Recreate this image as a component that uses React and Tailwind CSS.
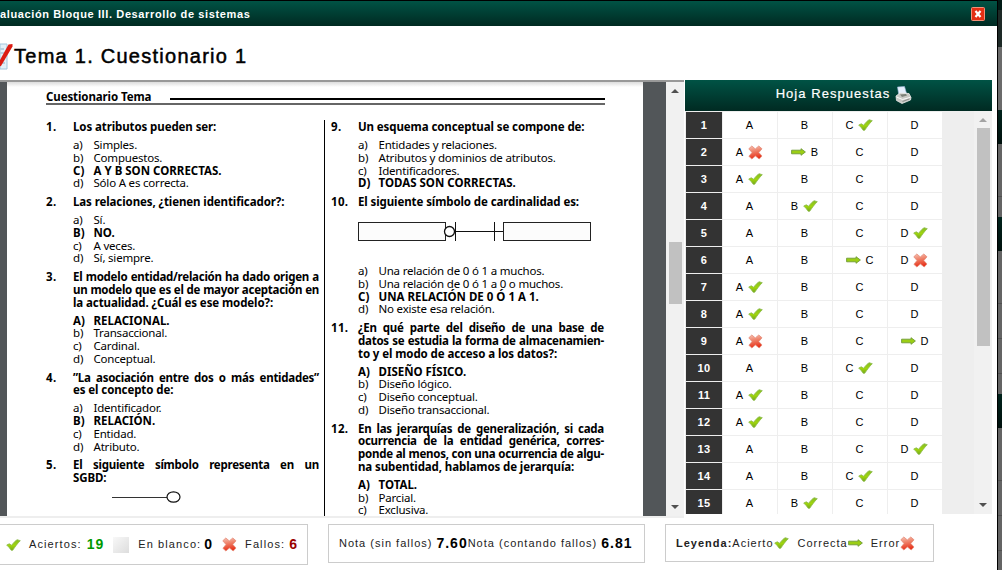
import React from 'react';

function Check() {
  return (
    <svg width="15" height="12" viewBox="0 0 15 12" className="shrink-0">
      <defs>
        <linearGradient id="ck" x1="0" y1="0" x2="0" y2="1">
          <stop offset="0" stopColor="#86bd24" />
          <stop offset=".55" stopColor="#9fd50c" />
          <stop offset="1" stopColor="#76a81c" />
        </linearGradient>
      </defs>
      <path d="M.7 6 3.300 4.800 5.600 6.300C7.300 4 9 2 11.200.7L14.300 1.700C11.200 4.600 9 8 6.700 11.300H5.200C3.900 9.300 2.500 7.600.7 6Z" fill="url(#ck)" stroke="#8cba4a" strokeWidth=".8" />
    </svg>
  );
}

function Cross() {
  return (
    <svg width="15" height="15" viewBox="0 0 15 15" className="shrink-0">
      <defs>
        <linearGradient id="cr" x1="0" y1="0" x2=".2" y2="1">
          <stop offset="0" stopColor="#f7c3b4" />
          <stop offset=".5" stopColor="#ee7b62" />
          <stop offset="1" stopColor="#e8321b" />
        </linearGradient>
      </defs>
      <path d="M.8 3.800 3.800 1 7.300 3.900 10.800 1 14 3.800 10.800 7.500 14 11 11.200 14 7.400 10.900 3.900 14 .9 11.300 4 7.500Z" fill="url(#cr)" stroke="#e58b78" strokeWidth=".8" />
    </svg>
  );
}

function Arrow() {
  return (
    <svg width="15" height="8" viewBox="0 0 15 8" className="shrink-0">
      <path d="M.6 2.200H10V.7L14.400 4 10 7.300V5.800H.6Z" fill="#9bce14" stroke="#6f9b35" strokeWidth=".9" />
    </svg>
  );
}

function Printer() {
  return (
    <svg width="17" height="19" viewBox="0 0 17 19" className="shrink-0">
      <path d="M2.500 1 9.500.5 12 9 4 10Z" fill="#e4effc" stroke="#9db9dc" strokeWidth=".6" />
      <path d="M1 10 5 7 14 7.500 16 11.500 15.500 14 7 17.500 1.500 14.500Z" fill="#c9c9c5" stroke="#e9e9e7" strokeWidth=".8" />
      <path d="M1.500 11 7.500 13.500 15.500 11.300" fill="none" stroke="#fafafa" />
      <path d="M5 8.500 11 8 12 9.500 7 11Z" fill="#7c8078" />
      <path d="m7.500 15.500 7-2.600" stroke="#8b8b88" />
    </svg>
  );
}

function Question({ n, lines, options, figure, correct }) {
  return (
    <div className="mb-[6px] flex">
      <b className="w-[27px] shrink-0 tracking-[0.3px]">{n}.</b>
      <div className="w-[246px] shrink-0">
        <div className="mb-[5.3px] font-bold">
          {lines.map(([text, justified]) => (
            <div key={text} className={justified ? 'whitespace-nowrap tracking-[-0.25px] [text-align-last:justify]' : 'whitespace-nowrap tracking-[-0.1px]'}>{text}</div>
          ))}
        </div>
        {figure}
        {options.map((text, i) => (
          <div key={text} className={i === correct ? 'flex whitespace-nowrap font-bold' : 'flex whitespace-nowrap tracking-[-0.2px]'}>
            <span className="w-[20.500px] shrink-0">{i === correct ? 'ABCD'[i] : 'abcd'[i]})</span>
            <span>{text}</span>
          </div>
        ))}
      </div>
    </div>
  );
}

const left = [
  { n: 1, lines: [['Los atributos pueden ser:']], options: ['Simples.', 'Compuestos.', 'A Y B SON CORRECTAS.', 'Sólo A es correcta.'], correct: 2 },
  { n: 2, lines: [['Las relaciones, ¿tienen identificador?:']], options: ['Sí.', 'NO.', 'A veces.', 'Sí, siempre.'], correct: 1 },
  { n: 3, lines: [['El modelo entidad/relación ha dado origen a', true], ['un modelo que es el de mayor aceptación en', true], ['la actualidad. ¿Cuál es ese modelo?:']], options: ['RELACIONAL.', 'Transaccional.', 'Cardinal.', 'Conceptual.'], correct: 0 },
  { n: 4, lines: [['”La asociación entre dos o más entidades”', true], ['es el concepto de:']], options: ['Identificador.', 'RELACIÓN.', 'Entidad.', 'Atributo.'], correct: 1 },
  { n: 5, lines: [['El siguiente símbolo representa en un', true], ['SGBD:']], options: [], figure: (
    <svg width="110" height="14" className="ml-[38px]"><path d="M1 7.500H56" stroke="#333" /><ellipse cx="62.500" cy="7" rx="6.500" ry="5.200" fill="#fff" stroke="#111" strokeWidth="1.200" /></svg>
  ) },
];

const cardinality = (
  <svg width="236" height="51" className="block">
    <g fill="#fcfcfc" stroke="#222"><rect x=".5" y="8.500" width="87" height="18" /><rect x="145.500" y="8.500" width="87" height="18" /></g>
    <path d="M97 17.500H145M97.500 8V27M136.500 8V27" stroke="#111" />
    <circle cx="91.500" cy="17.500" r="5" fill="#fff" stroke="#111" strokeWidth="1.300" />
  </svg>
);

const right = [
  { n: 9, lines: [['Un esquema conceptual se compone de:']], options: ['Entidades y relaciones.', 'Atributos y dominios de atributos.', 'Identificadores.', 'TODAS SON CORRECTAS.'], correct: 3 },
  { n: 10, lines: [['El siguiente símbolo de cardinalidad es:']], figure: cardinality, options: ['Una relación de 0 ó 1 a muchos.', 'Una relación de 0 ó 1 a 0 o muchos.', 'UNA RELACIÓN DE 0 Ó 1 A 1.', 'No existe esa relación.'], correct: 2 },
  { n: 11, lines: [['¿En qué parte del diseño de una base de', true], ['datos se estudia la forma de almacenamien-', true], ['to y el modo de acceso a los datos?:']], options: ['DISEÑO FÍSICO.', 'Diseño lógico.', 'Diseño conceptual.', 'Diseño transaccional.'], correct: 0 },
  { n: 12, lines: [['En las jerarquías de generalización, si cada', true], ['ocurrencia de la entidad genérica, corres-', true], ['ponde al menos, con una ocurrencia de algu-', true], ['na subentidad, hablamos de jerarquía:']], options: ['TOTAL.', 'Parcial.', 'Exclusiva.'], correct: 0 },
];

// c = correct choice, x = wrong choice, r = right answer that was missed
const answers = ['C:c', 'A:x B:r', 'A:c', 'B:c', 'D:c', 'C:r D:x', 'A:c', 'A:c', 'A:x D:r', 'C:c', 'A:c', 'A:c', 'D:c', 'C:c', 'B:c'].map((s) =>
  Object.fromEntries(s.split(' ').map((p) => p.split(':')))
);

function Triangle({ up, className }) {
  return <svg width="8" height="4" className={className}><path d={up ? 'M0 4 4 0 8 4Z' : 'M0 0H8L4 4Z'} fill="currentColor" /></svg>;
}

export default function App() {
  return (
    <div className="flex h-[570px] w-[1002px] overflow-hidden bg-white font-['Liberation_Sans',Arial,sans-serif] text-black">
      <div className="flex w-[997px] shrink-0 flex-col">
        <header className="flex h-[26px] shrink-0 items-center justify-between border-t border-black bg-linear-to-b from-[#005345] to-[#002a22] pr-3">
          <h1 className="whitespace-nowrap pt-[2px] text-[11px] font-bold tracking-[0.62px] text-white">aluación Bloque III. Desarrollo de sistemas</h1>
          <svg width="14" height="14" className="mt-px"><rect x=".5" y=".5" width="13" height="13" rx="1" fill="#e32f14" stroke="#f39078" /><path d="m4.500 4 5 6m0-6-5 6" stroke="#fff" strokeWidth="2.200" /></svg>
        </header>
        <div className="flex h-[54px] shrink-0 items-center pt-[6px]">
          <svg width="14" height="28" viewBox="0 0 14 28" className="shrink-0"><path d="M0 2H7V27H0Z" fill="#e3f0f8" stroke="#a4c6dc" /><path d="M0 7h4M0 11h4M0 21h5" stroke="#b8cfdf" strokeWidth="2" /><path d="M-2 21.500 8.500 2.500 12.500 2 12.500 4.500 1 24-2 25Z" fill="#dc1c12" /></svg>
          <h2 className="whitespace-nowrap text-[20px] tracking-[1.260px] [-webkit-text-stroke:0.500px_black]">Tema 1. Cuestionario 1</h2>
        </div>
        <div className="flex h-[436px] shrink-0">
          <section className="flex w-[684px] shrink-0 border-t-2 border-[#999] bg-[#525659]">
            <div className="ml-[7px] w-[636px] shrink-0 overflow-hidden bg-white bg-linear-to-b from-[#ddd] to-white to-[5px] font-['Noto_Sans','Open_Sans',sans-serif] text-[11.500px] leading-[12.750px]">
              <div className="ml-[39px] mt-[9px] flex h-[14px] w-[559px] items-center border-b-2 border-[#666] font-bold">
                <span className="w-[124px] whitespace-nowrap tracking-[-0.1px]">Cuestionario Tema</span>
                <span className="mt-1 h-[2px] grow bg-black" />
              </div>
              <div className="ml-[39px] mt-[15px] flex">
                <div className="h-[420px] w-[279px] shrink-0 border-r border-black pt-[1px]">{left.map((q) => <Question key={q.n} {...q} />)}</div>
                <div className="ml-[6px] pt-[1px]">{right.map((q) => <Question key={q.n} {...q} />)}</div>
              </div>
            </div>
            <div className="w-[23px] shrink-0" />
            <div className="flex w-[18px] flex-col items-center bg-[#f1f1f1] py-[7px] text-[#505050]">
              <Triangle up />
              <div className="mt-[149px] h-[62px] w-[13px] bg-[#c1c1c1]" />
              <Triangle className="mt-auto" />
            </div>
          </section>
          <section className="ml-px h-[434px] w-[307px] shrink-0 overflow-hidden bg-[#eee]">
            <div className="flex h-[31px] items-center justify-center gap-[5px] bg-linear-to-b from-[#005345] to-[#002a22] pl-[11px] text-[13px] tracking-[1.050px] text-white">
              <span className="-mt-1 [-webkit-text-stroke:0.200px_white]">Hoja Respuestas</span><Printer />
            </div>
            <div className="flex h-[403px]">
              <div className="w-[289px] shrink-0 overflow-hidden pl-px pt-px">
                {answers.map((row, i) => (
                  <div key={i} className="mb-px grid h-[26px] w-[256px] grid-cols-[36px_54px_54px_54px_54px] gap-px text-[11px]">
                    <div className="flex items-center justify-center bg-[#333] font-bold tracking-[0.3px] text-white">{i + 1}</div>
                    {['A', 'B', 'C', 'D'].map((l) => (
                      <div key={l} className="flex items-center justify-center gap-[5px] bg-white pr-px">
                        {row[l] === 'r' && <Arrow />}<span>{l}</span>{row[l] === 'c' && <Check />}{row[l] === 'x' && <Cross />}
                      </div>
                    ))}
                  </div>
                ))}
              </div>
              <div className="flex w-[18px] flex-col items-center bg-[#f1f1f1] py-[7px] text-[#505050]">
                <Triangle up className="text-[#a3a3a3]" />
                <div className="mt-[6px] h-[218px] w-[13px] bg-[#c1c1c1]" />
                <Triangle className="mt-auto" />
              </div>
            </div>
          </section>
        </div>
        <div className="h-[2px] w-[684px] shrink-0 bg-[#eee]" />
        <footer className="flex items-start pt-[6px] text-[11px] tracking-[1px] text-[#222]">
          <div className="flex h-[41px] w-[308px] shrink-0 items-center whitespace-nowrap border border-l-0 border-[#ccc] pl-[6px]">
            <Check /><span className="ml-[8px] tracking-[1.100px]">Aciertos:</span><b className="ml-[5px] text-[14px] text-[#090]">19</b>
            <span className="ml-[9px] h-[16px] w-[16px] shrink-0 bg-linear-to-br from-[#f8f8f8] to-[#ddd]" />
            <span className="ml-[9px] tracking-[1.100px]">En blanco:</span><b className="ml-[3px] text-[14px] text-black">0</b>
            <span className="ml-[9px]"><Cross /></span><span className="ml-[8px] tracking-[1.100px]">Fallos:</span><b className="ml-[4px] text-[14px] text-[#900]">6</b>
          </div>
          <div className="ml-[20px] flex h-[39px] w-[317px] shrink-0 items-center whitespace-nowrap border border-[#ccc] pl-[10px]">
            <span>Nota (sin fallos)</span><b className="ml-[4px] text-[14px] text-black">7.60</b><span>Nota (contando fallos)</span><b className="ml-[4px] text-[14px] text-black">6.81</b>
          </div>
          <div className="ml-[20px] flex h-[38px] w-[269px] shrink-0 items-center whitespace-nowrap border border-[#ccc] pl-[10px]">
            <b>Leyenda:</b><span>Acierto</span><Check /><span className="ml-[9px]">Correcta</span><Arrow /><span className="ml-[8px]">Error</span><Cross />
          </div>
        </footer>
      </div>
      <div className="flex w-[5px] flex-col border-l border-black bg-[#646464]">
        <div className="h-[10px] bg-[#001a15]" />
        <div className="h-[37px] bg-[#1d2926]" />
        <div className="h-[63px] bg-[#6b6b6b]" />
        <div className="h-[34px] bg-linear-to-b from-[#00231c] to-[#00110d]" />
        <div className="h-[73px] border-b-[21px] border-[#646464]"><div className="h-[53px] border-b border-[#505050]" /></div>
        <div className="h-[34px] bg-linear-to-b from-[#00231c] to-[#00110d]" />
        <div className="h-[53px] border-b border-[#505050]" />
        <div className="h-[35px] border-b border-[#505050]" />
        <div className="h-[35px] border-b border-[#505050]" />
        <div className="h-[20px]" />
        <div className="h-[34px] bg-linear-to-b from-[#00231c] to-[#00110d]" />
        <div className="h-[53px] border-b border-[#505050]" />
        <div className="h-[35px] border-b border-[#505050]" />
        <div className="h-[35px] border-b border-[#505050]" />
      </div>
    </div>
  );
}
